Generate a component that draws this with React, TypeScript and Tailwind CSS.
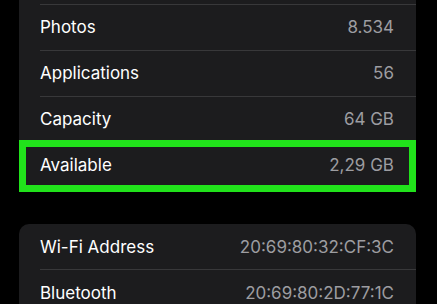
export default function App() {
    const topRows = [
        { label: 'Photos', value: '8.534' },
        { label: 'Applications', value: '56' },
        { label: 'Capacity', value: '64 GB' },
    ];
    const bottomRows = [
        { label: 'Wi-Fi Address', value: '20:69:80:32:CF:3C' },
        { label: 'Bluetooth', value: '20:69:80:2D:77:1C' },
    ];

    return (
        <div
            className="w-[437px] h-[304px] overflow-hidden bg-black text-[17px] text-white"
            style={{ fontFamily: 'Inter, "Liberation Sans", sans-serif' }}
        >
            {/* Storage card, scrolled so its top is cut off */}
            <div className="mx-[19px] w-[397px] bg-[#1c1c1e] pt-[4px]">
                {topRows.map((row) => (
                    <div key={row.label} className="pl-[21px]">
                        <div className="flex h-[46px] items-center justify-between border-t border-[#38383a] pt-[1px] pr-[22px]">
                            <span>{row.label}</span>
                            <span className="text-[#9d9da1]">{row.value}</span>
                        </div>
                    </div>
                ))}

                {/* Highlighted row */}
                <div className="relative pl-[21px]">
                    <div className="flex h-[46px] items-center justify-between pt-[2px] pr-[22px]">
                        <span>Available</span>
                        <span className="text-[#9d9da1]">2,29 GB</span>
                    </div>
                    <div className="absolute -top-[2px] -bottom-[4px] left-0 right-0 border-[7px] border-[#21e21b]"></div>
                </div>
            </div>

            {/* Network card */}
            <div className="mx-[19px] mt-[36px] w-[397px] rounded-[10px] bg-[#1c1c1e]">
                {bottomRows.map((row, i) => (
                    <div key={row.label} className="pl-[21px]">
                        <div
                            className={
                                i === 0
                                    ? 'flex h-[45px] items-center justify-between pt-[2px] pr-[22px]'
                                    : 'flex h-[46px] items-center justify-between border-t border-[#38383a] pt-[2px] pr-[22px]'
                            }
                        >
                            <span>{row.label}</span>
                            <span className="text-[#9d9da1]">{row.value}</span>
                        </div>
                    </div>
                ))}
            </div>
        </div>
    );
}
